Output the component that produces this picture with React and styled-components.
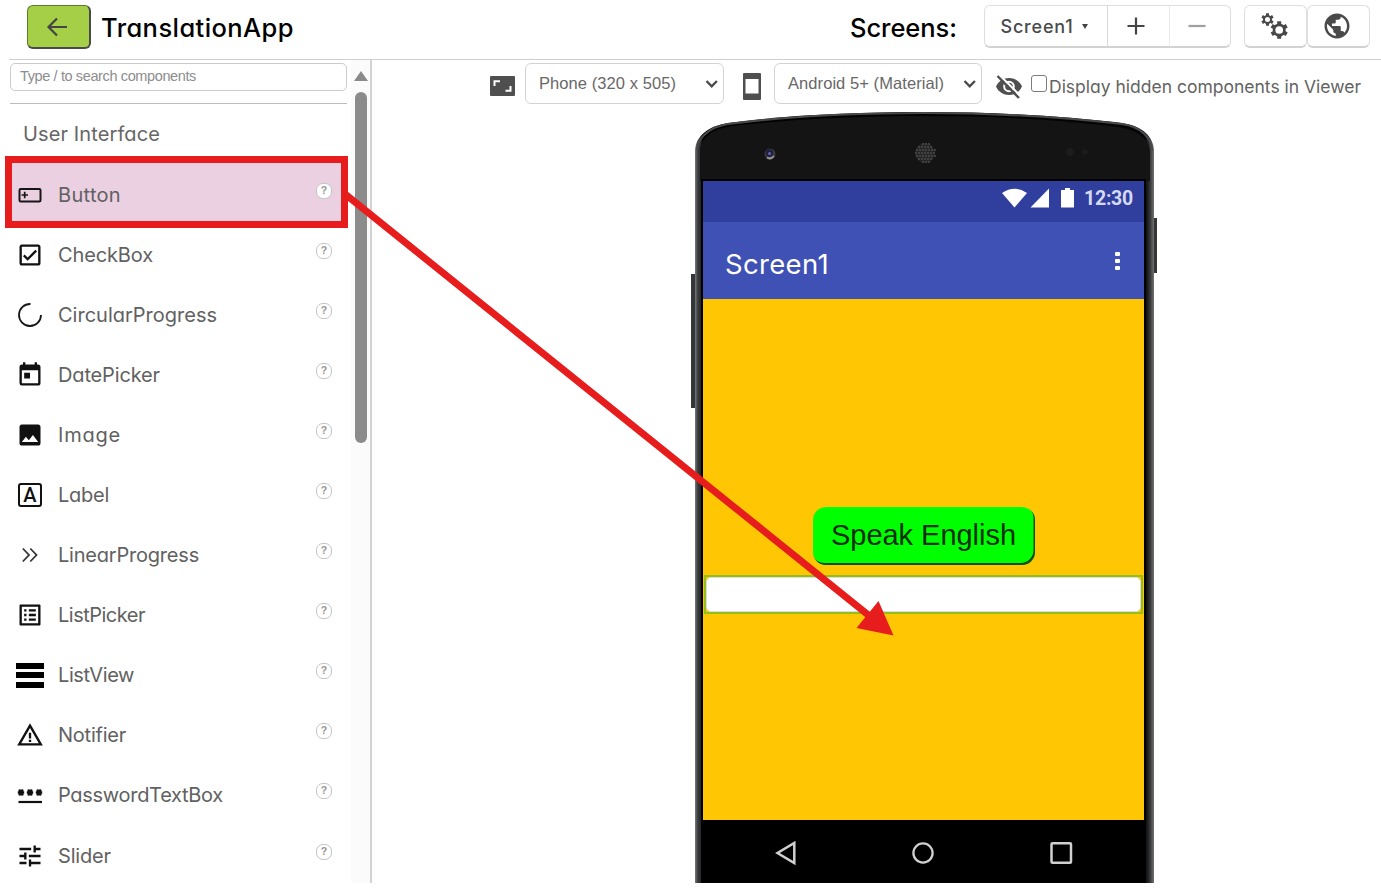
import React, { useLayoutEffect, useRef } from 'react';
import styled, { createGlobalStyle } from 'styled-components';
import {
  MdOutlineCheckBox, MdToday, MdImage, MdOutlineListAlt, MdWarningAmber, MdTune, MdPublic,
} from 'react-icons/md';

const Global = createGlobalStyle`
  * { box-sizing: border-box; }
  body { margin: 0; background: #fff; overflow: hidden; }
`;

const geo = `font-family: Inter, "Open Sans", sans-serif; font-feature-settings: "cv11";`;
const arial = `font-family: "Liberation Sans", Arial, sans-serif;`;

const Page = styled.div`
  position: relative;
  width: 1381px;
  height: 883px;
  display: flex;
  flex-direction: column;
  overflow: hidden;
  ${geo}
`;

const FitText = styled.span`
  display: inline-block;
  white-space: nowrap;
  flex: none;
`;

/* Spaces the letters so that the label takes its design width in any font. */
function Fit({ width, children }) {
  const ref = useRef(null);
  useLayoutEffect(() => {
    const el = ref.current;
    el.style.letterSpacing = '0px';
    const natural = el.getBoundingClientRect().width;
    el.style.letterSpacing = `${(width - natural) / children.length}px`;
  }, [width, children]);
  return <FitText ref={ref}>{children}</FitText>;
}

/* ---------- header ---------- */
const Header = styled.header`
  flex: none;
  height: 60px;
  margin-left: 9px;
  padding: 5px 11px 0 18px;
  border-bottom: 1px solid #cfcfcf;
  display: flex;
  align-items: flex-start;
`;
const BackButton = styled.div`
  width: 64px;
  height: 44px;
  padding-right: 3px;
  border: 1px solid #5d7a2a;
  border-right: 2px solid #4a4a4a;
  border-bottom: 2px solid #4a4a4a;
  border-radius: 6px;
  background: #a5cf47;
  display: flex;
  align-items: center;
  justify-content: center;
`;
const HeaderTitle = styled.div`
  font-size: 25.5px;
  line-height: 45px;
  font-weight: 500;
  color: #000;
  margin-left: ${p => p.$left};
  margin-right: ${p => p.$right || 0};
`;
const Group = styled.div`
  display: flex;
  height: 43px;
  margin-right: ${p => p.$gap || 0}px;
  border: 1px solid #dedede;
  border-bottom: 2px solid #d2d2d2;
  border-radius: 6px;
`;
const GroupCell = styled.div`
  width: ${p => p.$w}px;
  padding-right: ${p => p.$shift || 0}px;
  display: flex;
  align-items: center;
  justify-content: center;
  gap: 8px;
  font-size: 18px;
  font-weight: 500;
  color: #4a4a4a;
  border-left: ${p => (p.$divided ? '1px solid #d9d9d9' : 'none')};
  opacity: ${p => (p.$disabled ? 0.5 : 1)};
`;
const Caret = styled.i`
  border: 3.5px solid transparent;
  border-top: 5.5px solid #444;
  border-bottom: 0;
`;

/* ---------- palette ---------- */
const Body = styled.div`
  flex: 1;
  display: flex;
  min-height: 0;
`;
const Palette = styled.aside`
  width: 372px;
  flex: none;
  display: flex;
  border-right: 2px solid #d2d2d2;
`;
const PaletteList = styled.div`
  width: 351px;
  padding: 3px 4px 0 10px;
  flex: none;
`;
const Search = styled.div`
  height: 28px;
  border: 1.5px solid #cbcbcb;
  border-radius: 5px;
  padding-left: 9px;
  line-height: 24px;
  font-size: 14.5px;
  color: #8d8d8d;
  ${arial}
`;
const Section = styled.div`
  margin-top: 12px;
  border-top: 1px solid #bdbdbd;
  height: 62px;
  padding-left: 13px;
  line-height: 60px;
  font-size: 20px;
  color: #666;
`;
const Row = styled.div`
  position: relative;
  z-index: 0;
  height: 60.05px;
  display: flex;
  align-items: center;
  padding: 0 15px 0 4px;
  font-size: 20px;
  color: #616161;
`;
const Highlight = styled.div`
  position: absolute;
  z-index: -1;
  left: -5px;
  top: -9px;
  width: 343px;
  height: 72px;
  border: 7px solid #e71c1c;
  background: #ebd0e2;
`;
const RowIcon = styled.span`
  width: 32px;
  height: 32px;
  margin-right: 12px;
  display: flex;
  align-items: center;
  justify-content: center;
  color: #111;
`;
const Help = styled.span`
  width: 16px;
  height: 16px;
  margin: -8px 0 0 auto;
  border: 1.5px solid #c4c4c4;
  border-radius: 7px;
  background: #fff;
  font-size: 10.5px;
  line-height: 13px;
  font-weight: 700;
  text-align: center;
  color: #959595;
  ${arial}
`;
const LetterBox = styled.span`
  width: 24px;
  height: 24px;
  border: 2px solid #111;
  border-radius: 3px;
  font: 500 20px/21px Roboto, sans-serif;
  text-align: center;
`;
const Bars = styled.span`
  width: 28px;
  display: flex;
  flex-direction: column;
  gap: 3.6px;
  i { height: 6px; background: #000; }
`;
const Scroll = styled.div`
  flex: 1;
  background: #fbfbfb;
  display: flex;
  flex-direction: column;
  align-items: center;
  padding: 11px 0 0 0;
`;
const ScrollUp = styled.i`
  border: 7px solid transparent;
  border-bottom: 10px solid #8a8a8a;
  border-top: 0;
`;
const Thumb = styled.div`
  margin-top: 11px;
  width: 12px;
  height: 351px;
  border-radius: 6px;
  background: #8b8b8b;
`;

/* ---------- viewer ---------- */
const Viewer = styled.main`
  flex: 1;
  min-width: 0;
`;
const Tools = styled.div`
  height: 45px;
  padding: 3px 0 0 118px;
  display: flex;
  align-items: flex-start;
  color: #4f4f4f;
`;
const ToolIcon = styled.span`
  display: flex;
  width: ${p => p.$w}px;
  margin: ${p => p.$top}px ${p => p.$right}px 0 0;
`;
const Select = styled.div`
  width: ${p => p.$w}px;
  height: 41px;
  margin-right: ${p => p.$gap}px;
  padding: 0 4px 0 13px;
  display: flex;
  align-items: center;
  justify-content: space-between;
  border: 1.5px solid #d3d3d3;
  border-radius: 6px;
  font-size: 16.5px;
  color: #686868;
  ${arial}
`;
const Check = styled.span`
  width: 16px;
  height: 17px;
  margin: 12px 2px 0 0;
  border: 1.5px solid #7c7c7c;
  border-radius: 3px;
`;
const CheckLabel = styled.span`
  margin-top: 13px;
  line-height: 22px;
  font-size: 17.5px;
  color: #636363;
`;

/* ---------- phone ---------- */
const Phone = styled.div`
  position: relative;
  width: 467px;
  height: 778px;
  margin-left: 318px;
  padding: 76px 13px 0 13px;
`;
const Shell = styled.svg`
  position: absolute;
  left: 0;
  top: 0;
`;
const Screen = styled.div`
  position: relative;
  width: 441px;
  display: flex;
  flex-direction: column;
`;
const Status = styled.div`
  height: 41px;
  padding: 0 11px 7px 0;
  background: #303e9e;
  display: flex;
  align-items: center;
  justify-content: flex-end;
  font: 700 19.5px Roboto, sans-serif;
  color: #d5d9f2;
`;
const StatusIcons = styled.svg`
  margin-right: 10px;
`;
const TitleBar = styled.div`
  height: 77px;
  padding: 6px 24px 0 22px;
  background: #3f51b5;
  display: flex;
  align-items: center;
  justify-content: space-between;
  font-size: 27.5px;
  color: #fff;
`;
const Dots = styled.span`
  display: flex;
  flex-direction: column;
  gap: 3px;
  margin-top: -5px;
  i { width: 5px; height: 4px; border-radius: 1px; background: #fff; }
`;
const Canvas = styled.div`
  height: 521px;
  padding-top: 208px;
  background: #ffc703;
  display: flex;
  flex-direction: column;
  align-items: center;
`;
const Speak = styled.div`
  width: 222px;
  height: 58px;
  border-radius: 13px;
  background: #00ff00;
  box-shadow: inset -1.5px -2px 0 #174d10;
  padding: 0 0 2px;
  display: flex;
  align-items: center;
  justify-content: center;
  font-size: 29px;
  color: #062f06;
  ${arial}
`;
const TextBox = styled.div`
  width: 439px;
  height: 39px;
  margin: 9.500px 1px 0 0;
  border: 2px solid #95bf18;
  display: flex;
  i { flex: 1; background: #fff; border-radius: 5px; border: 1px solid #ddd; }
`;
const Nav = styled.div`
  height: 63px;
  background: #000;
  display: flex;
  align-items: center;
  justify-content: space-between;
  padding: 3px 71px 0 70px;
`;
const Arrow = styled.svg`
  position: absolute;
  left: 0;
  top: 0;
  pointer-events: none;
`;

const Svg = ({ w, h, children, ...rest }) => (
  <svg width={w} height={h} viewBox={`0 0 ${w} ${h}`} fill="none" {...rest}>{children}</svg>
);

/* A ring with six teeth, centred on (x, y). */
const Gear = ({ x, y, ring, line, tooth, reach }) => (
  <g transform={`translate(${x} ${y})`} stroke="#484848">
    <circle r={ring} strokeWidth={line} />
    {[0, 60, 120].map(a => (
      <path key={a} transform={`rotate(${a})`} strokeWidth={tooth} d={`M0 ${-reach}V${-ring}M0 ${ring}V${reach}`} />
    ))}
  </g>
);
const GearsIcon = () => (
  <Svg w={28} h={28}>
    <Gear x={7.5} y={7.5} ring={3.5} line={2} tooth={3} reach={6.2} />
    <Gear x={19.200} y={18} ring={5.2} line={2.700} tooth={4} reach={8.7} />
  </Svg>
);
const HiddenIcon = () => (
  <Svg w={28} h={26}>
    <path d="M1 12.500C3.500 7 8.500 4 14 4S24.500 7 27 12.500C24.500 18 19.500 21 14 21S3.500 18 1 12.500Z" fill="#4f4f4f" />
    <circle cx="14" cy="12.500" r="4.800" stroke="#fff" strokeWidth="2" />
    <path d="M4.500 1L26 22.500" stroke="#fff" strokeWidth="2.200" />
    <path d="M2.500 2L24 24" stroke="#4f4f4f" strokeWidth="2.400" />
  </Svg>
);
const ButtonIcon = () => (
  <Svg w={24} h={16} stroke="#161616" strokeWidth="2">
    <rect x="1.5" y="2" width="21" height="12.5" rx="1.2" />
    <path d="M3.5 8h6.5M6.7 4.8v6.4" strokeWidth="1.7" />
  </Svg>
);
const ProgressIcon = () => (
  <Svg w={26} h={26} stroke="#161616" strokeWidth="1.8">
    <path d="M13.5 2A11 11 0 1 0 24 13" />
  </Svg>
);
const DoubleArrowIcon = () => (
  <Svg w={18} h={16} stroke="#333" strokeWidth="1.8">
    <path d="M1.800 1.500L8 8l-6.200 6.500M9.300 1.500L15.500 8l-6.200 6.500" />
  </Svg>
);
const PasswordIcon = () => (
  <Svg w={26} h={26} stroke="#111">
    {[4, 13, 22].map(x => (
      <path key={x} strokeWidth="2.4" d={`M${x - 3.2} 10.5h6.4M${x - 1.8} 7.500l3.6 6M${x + 1.8} 7.500l-3.6 6`} />
    ))}
    <path d="M1.500 20h23.500" strokeWidth="2.2" />
  </Svg>
);
const Chevron = () => (
  <Svg w={14} h={12} stroke="#4a4a4a" strokeWidth="2.3"><path d="M1.500 3l5.200 5.300L11.900 3" /></Svg>
);

const items = [
  ['Button', 63, <ButtonIcon />],
  ['CheckBox', 95, <MdOutlineCheckBox size={28} />],
  ['CircularProgress', 159, <ProgressIcon />],
  ['DatePicker', 102, <MdToday size={28} />],
  ['Image', 63, <MdImage size={28} />],
  ['Label', 51, <LetterBox>A</LetterBox>],
  ['LinearProgress', 141, <DoubleArrowIcon />],
  ['ListPicker', 87, <MdOutlineListAlt size={28} />],
  ['ListView', 76, <Bars><i /><i /><i /></Bars>],
  ['Notifier', 68, <MdWarningAmber size={28} />],
  ['PasswordTextBox', 165, <PasswordIcon />],
  ['Slider', 53, <MdTune size={28} />],
];

const grille = [];
for (let y = -9; y <= 9; y += 3) {
  for (let x = -9; x <= 9; x += 3) if (x * x + y * y < 105) grille.push([x + (y % 2 ? 1 : 0), y]);
}

export default function App() {
  return (
    <Page>
      <Global />
      <Header>
        <BackButton>
          <Svg w={22} h={20} stroke="#454545" strokeWidth="2.200"><path d="M21 10H3M11 1.500L2.500 10l8.500 8.500" /></Svg>
        </BackButton>
        <HeaderTitle $left="10px"><Fit width={193}>TranslationApp</Fit></HeaderTitle>
        <HeaderTitle $left="auto" $right="27px"><Fit width={107}>Screens:</Fit></HeaderTitle>
        <Group $gap={13}>
          <GroupCell $w={122} $shift={4}><Fit width={73}>Screen1</Fit><Caret /></GroupCell>
          <GroupCell $w={62} $divided $shift={6}><Svg w={18} h={18} stroke="#444" strokeWidth="2.200"><path d="M0.500 9h17M9 .5v17" /></Svg></GroupCell>
          <GroupCell $w={61} $divided $disabled $shift={6}><Svg w={18} h={18} stroke="#444" strokeWidth="2.200"><path d="M0.500 9h17" /></Svg></GroupCell>
        </Group>
        <Group>
          <GroupCell $w={61} $shift={3}><GearsIcon /></GroupCell>
        </Group>
        <Group>
          <GroupCell $w={61} $shift={4}><MdPublic size={30} /></GroupCell>
        </Group>
      </Header>

      <Body>
        <Palette>
          <PaletteList>
            <Search><Fit width={176}>Type / to search components</Fit></Search>
            <Section><Fit width={137}>User Interface</Fit></Section>
            {items.map(([name, width, icon], i) => (
              <Row key={name}>
                {i === 0 && <Highlight />}
                <RowIcon>{icon}</RowIcon>
                <Fit width={width}>{name}</Fit>
                <Help>?</Help>
              </Row>
            ))}
          </PaletteList>
          <Scroll><ScrollUp /><Thumb /></Scroll>
        </Palette>

        <Viewer>
          <Tools>
            <ToolIcon $w={25} $top={13} $right={10}>
              <Svg w={25} h={20}>
                <rect width="25" height="20" rx="1" fill="#4f4f4f" />
                <path d="M4.500 10V5.300H10M15.500 14.700H20.500V10" stroke="#fff" strokeWidth="2" />
              </Svg>
            </ToolIcon>
            <Select $w={199} $gap={19}><Fit width={137}>Phone (320 x 505)</Fit><Chevron /></Select>
            <ToolIcon $w={18} $top={10} $right={13}>
              <Svg w={18} h={27}><rect width="18" height="27" rx="1" fill="#4f4f4f" /><rect x="2.500" y="6" width="13" height="14.500" fill="#fff" /></Svg>
            </ToolIcon>
            <Select $w={208} $gap={13}><Fit width={156}>Android 5+ (Material)</Fit><Chevron /></Select>
            <ToolIcon $w={28} $top={11} $right={8}><HiddenIcon /></ToolIcon>
            <Check />
            <CheckLabel><Fit width={312}>Display hidden components in Viewer</Fit></CheckLabel>
          </Tools>

          <Phone>
            <Shell width="467" height="778" viewBox="690 105 467 778">
              <defs>
                <linearGradient id="edge" x1="695" x2="1154" y1="0" y2="0" gradientUnits="userSpaceOnUse">
                  <stop offset="0" stopColor="#77797b" />
                  <stop offset="0.006" stopColor="#3c3d3f" />
                  <stop offset="0.012" stopColor="#292a2b" />
                  <stop offset="0.017" stopColor="#000" />
                  <stop offset="0.980" stopColor="#050505" />
                  <stop offset="0.990" stopColor="#2d2e2f" />
                  <stop offset="1" stopColor="#707274" />
                </linearGradient>
              </defs>
              <rect x="691" y="274" width="5" height="134" fill="#353638" />
              <rect x="1153" y="218" width="4" height="55" fill="#353638" />
              <path d="M695 890V150C696 136 708 126 728 123C790 115 856 112 924 112C994 112 1062 116 1122 123C1143 126 1153 137 1154 150V890Z" fill="url(#edge)" />
              <path d="M700 181V150C701 138 712 129 732 126C792 119 858 116 924 116C990 116 1058 119 1118 127C1139 130 1149 140 1150 152V181Z" fill="#141414" />
              <path d="M697 150C698 137 710 127 728 124C790 116 856 113 924 113C994 113 1062 117 1122 124C1142 127 1151 138 1152 150" fill="none" stroke="#48494a" strokeWidth="2.200" />
              <rect x="701" y="179" width="445" height="711" fill="#000" />
              <circle cx="770" cy="154" r="5.500" fill="#3c3c3c" />
              <path d="M767 157.500Q770.500 160 774 156" fill="none" stroke="#9a9a9a" strokeWidth="1.800" />
              <circle cx="769.500" cy="153" r="3.700" fill="#202040" />
              <circle cx="769.500" cy="153.500" r="1.500" fill="#6264b8" />
              <circle cx="925" cy="153" r="10" fill="#262626" />
              {grille.map(([x, y]) => <circle key={`${x},${y}`} cx={925 + x} cy={153 + y} r="1.100" fill="#494949" />)}
              <circle cx="1070" cy="152" r="4" fill="#1d1c1d" />
              <circle cx="1085" cy="152" r="2.500" fill="#1d1c1d" />
            </Shell>
            <Screen>
              <Status>
                <StatusIcons width="72" height="22" viewBox="0 0 72 22" fill="#fff">
                  <path d="M0 6Q12.500-2.500 25 6L12.500 20.500Z" />
                  <path d="M47 1.500V20.500H28.500Z" />
                  <path d="M59 3h4V1h5v2h4V20.500H59Z" />
                </StatusIcons>
                <Fit width={49}>12:30</Fit>
              </Status>
              <TitleBar>
                <Fit width={104}>Screen1</Fit>
                <Dots><i /><i /><i /></Dots>
              </TitleBar>
              <Canvas>
                <Speak><Fit width={185}>Speak English</Fit></Speak>
                <TextBox><i /></TextBox>
              </Canvas>
              <Nav>
                <Svg w={24} h={26} stroke="#d0d0d0" strokeWidth="2.500"><path d="M21.300 3V23L4.500 13Z" /></Svg>
                <Svg w={24} h={24} stroke="#d0d0d0" strokeWidth="2.300"><circle cx="12" cy="12" r="9.600" /></Svg>
                <Svg w={24} h={24} stroke="#d0d0d0" strokeWidth="2.500"><rect x="2.500" y="2.300" width="19.500" height="19.500" rx="1" /></Svg>
              </Nav>
            </Screen>
          </Phone>
        </Viewer>
      </Body>

      <Arrow width="1381" height="883">
        <path d="M345 194L872 618" stroke="#e71c1c" strokeWidth="7" />
        <path d="M893.500 635.500L878.500 601L856.500 628Z" fill="#e71c1c" />
      </Arrow>
    </Page>
  );
}
